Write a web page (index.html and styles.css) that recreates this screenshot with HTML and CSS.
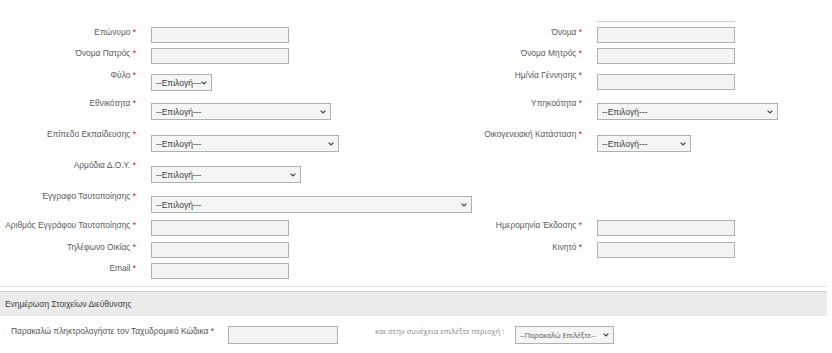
FILE: index.html
```html
<!DOCTYPE html>
<html lang="el">
<head>
<meta charset="utf-8">
<link rel="stylesheet" href="styles.css">
</head>
<body>
<div class="page">
  <div class="form">
    <div class="row r-top"><span></span><span></span><span></span><span class="topline"></span></div>

    <div class="row h21">
      <label class="lbl">Επώνυμο <b class="req">*</b></label>
      <div class="fld"><input class="inp" type="text"></div>
      <label class="lbl">Όνομα <b class="req">*</b></label>
      <div class="fld"><input class="inp" type="text"></div>
    </div>

    <div class="row h22">
      <label class="lbl">Όνομα Πατρός <b class="req">*</b></label>
      <div class="fld"><input class="inp" type="text"></div>
      <label class="lbl">Όνομα Μητρός <b class="req">*</b></label>
      <div class="fld"><input class="inp" type="text"></div>
    </div>

    <div class="row h28 off4">
      <label class="lbl">Φύλο <b class="req">*</b></label>
      <div class="fld"><span class="selbox w61"><select class="sel"><option>--Επιλογή---</option></select><svg class="chev" viewBox="0 0 6 4" width="6" height="4"><path d="M0.6 0.6 L3 3 L5.4 0.6" /></svg></span></div>
      <label class="lbl">Ημ/νία Γέννησης <b class="req">*</b></label>
      <div class="fld"><input class="inp" type="text"></div>
    </div>

    <div class="row h31 off5">
      <label class="lbl">Εθνικότητα <b class="req">*</b></label>
      <div class="fld"><span class="selbox w180"><select class="sel"><option>--Επιλογή---</option></select><svg class="chev" viewBox="0 0 6 4" width="6" height="4"><path d="M0.6 0.6 L3 3 L5.4 0.6" /></svg></span></div>
      <label class="lbl">Υπηκοότητα <b class="req">*</b></label>
      <div class="fld"><span class="selbox w181"><select class="sel"><option>--Επιλογή---</option></select><svg class="chev" viewBox="0 0 6 4" width="6" height="4"><path d="M0.6 0.6 L3 3 L5.4 0.6" /></svg></span></div>
    </div>

    <div class="row h31 off6">
      <label class="lbl">Επίπεδο Εκπαίδευσης <b class="req">*</b></label>
      <div class="fld"><span class="selbox w188"><select class="sel"><option>--Επιλογή---</option></select><svg class="chev" viewBox="0 0 6 4" width="6" height="4"><path d="M0.6 0.6 L3 3 L5.4 0.6" /></svg></span></div>
      <label class="lbl">Οικογενειακή Κατάσταση <b class="req">*</b></label>
      <div class="fld"><span class="selbox w94"><select class="sel"><option>--Επιλογή---</option></select><svg class="chev" viewBox="0 0 6 4" width="6" height="4"><path d="M0.6 0.6 L3 3 L5.4 0.6" /></svg></span></div>
    </div>

    <div class="row h31 off6">
      <label class="lbl">Αρμόδια Δ.Ο.Υ. <b class="req">*</b></label>
      <div class="fld"><span class="selbox w150"><select class="sel"><option>--Επιλογή---</option></select><svg class="chev" viewBox="0 0 6 4" width="6" height="4"><path d="M0.6 0.6 L3 3 L5.4 0.6" /></svg></span></div>
    </div>

    <div class="row h29 off5">
      <label class="lbl">Έγγραφο Ταυτοποίησης <b class="req">*</b></label>
      <div class="fld span2"><span class="selbox w321"><select class="sel"><option>--Επιλογή---</option></select><svg class="chev" viewBox="0 0 6 4" width="6" height="4"><path d="M0.6 0.6 L3 3 L5.4 0.6" /></svg></span></div>
    </div>

    <div class="row h22">
      <label class="lbl">Αριθμός Εγγράφου Ταυτοποίησης <b class="req">*</b></label>
      <div class="fld"><input class="inp" type="text"></div>
      <label class="lbl">Ημερομηνία Έκδοσης <b class="req">*</b></label>
      <div class="fld"><input class="inp" type="text"></div>
    </div>

    <div class="row h21">
      <label class="lbl">Τηλέφωνο Οικίας <b class="req">*</b></label>
      <div class="fld"><input class="inp" type="text"></div>
      <label class="lbl">Κινητό <b class="req">*</b></label>
      <div class="fld"><input class="inp" type="text"></div>
    </div>

    <div class="row h20">
      <label class="lbl">Email <b class="req">*</b></label>
      <div class="fld"><input class="inp" type="text"></div>
    </div>
  </div>

  <div class="divider"></div>

  <div class="section-head">Ενημέρωση Στοιχείων Διεύθυνσης</div>

  <div class="postal">
    <label class="postal-lbl">Παρακαλώ πληκτρολογήστε τον Ταχυδρομικό Κώδικα <b class="req">*</b></label>
    <input class="inp postal-inp" type="text">
    <span class="postal-note">και στην συνέχεια επιλέξτε περιοχή :</span>
    <span class="selbox postal-box"><select class="sel postal-sel"><option>--Παρακαλώ Επιλέξτε--</option></select><svg class="chev" viewBox="0 0 6 4" width="6" height="4"><path d="M0.6 0.6 L3 3 L5.4 0.6" /></svg></span>
  </div>
</div>
</body>
</html>
```

FILE: styles.css
```css
* { box-sizing: border-box; }

html, body {
  margin: 0;
  padding: 0;
  background: #ffffff;
}

body {
  font-family: "Liberation Sans", Arial, sans-serif;
  font-size: 8.4px;
  color: #555555;
}

.page {
  width: 827px;
}

.form {
  padding-top: 21px;
}

.row {
  display: grid;
  grid-template-columns: 151px 309px 137px 231px;
  align-items: start;
}

.r-top { height: 6px; }
.topline {
  display: block;
  width: 138px;
  border-top: 1px solid #cfcfcf;
}

.h20 { height: 20px; }
.h21 { height: 21px; }
.h22 { height: 22px; }
.h28 { height: 28px; }
.h29 { height: 29px; }
.h31 { height: 31px; }

.off4 .fld { padding-top: 4px; }
.off5 .fld { padding-top: 5px; }
.off6 .fld { padding-top: 6px; }

.lbl {
  display: block;
  text-align: right;
  padding-right: 15px;
  line-height: 11px;
  font-size: 8.4px;
  color: #5a5a5a;
  white-space: nowrap;
}

.req {
  color: #d9000d;
  font-weight: normal;
}

.fld { display: block; }
.span2 { grid-column: 2 / span 2; }

.inp {
  display: block;
  width: 138px;
  height: 16px;
  margin: 0;
  border: 1px solid #b0b0b0;
  background: #f4f4f4;
  padding: 0 3px;
  font-size: 8.4px;
}

.selbox {
  position: relative;
  display: block;
  height: 17px;
}

.sel {
  -webkit-appearance: none;
  appearance: none;
  display: block;
  width: 100%;
  height: 100%;
  margin: 0;
  border: 1px solid #b0b0b0;
  border-radius: 0;
  background-color: #f5f5f5;
  padding: 0 8px 0 4px;
  font-family: "Liberation Sans", Arial, sans-serif;
  font-size: 8.5px;
  color: #383838;
}

.chev {
  position: absolute;
  right: 5px;
  top: 7px;
  fill: none;
  stroke: #444444;
  stroke-width: 1.2;
}

.w61 { width: 61px; }
.w94 { width: 94px; }
.w150 { width: 150px; }
.w180 { width: 180px; }
.w181 { width: 181px; }
.w188 { width: 188px; }
.w321 { width: 321px; }

.divider {
  margin-top: 3px;
  border-top: 1px solid #e4e4e4;
}

.section-head {
  margin-top: 4px;
  height: 25px;
  border-top: 1px solid #cdcdcd;
  background: #ebebeb;
  padding-left: 5px;
  line-height: 24px;
  font-size: 8.4px;
  color: #3c3c3c;
}

.postal {
  display: flex;
  align-items: flex-start;
  padding-top: 10px;
  padding-left: 11px;
}

.postal-lbl {
  width: 217px;
  line-height: 11px;
  color: #555555;
  white-space: nowrap;
}

.postal-inp {
  width: 110px;
  height: 18px;
}

.postal-note {
  margin-left: 37px;
  width: 140px;
  line-height: 11px;
  font-family: "Open Sans", sans-serif;
  font-size: 7.5px;
  color: #8a8a8a;
  white-space: nowrap;
}

.postal-box {
  width: 99px;
  height: 18px;
}

.postal-sel {
  font-family: "Open Sans", sans-serif;
  font-size: 7.2px;
  color: #555555;
  padding-left: 4px;
}

.postal-box .chev { top: 7px; }
```
